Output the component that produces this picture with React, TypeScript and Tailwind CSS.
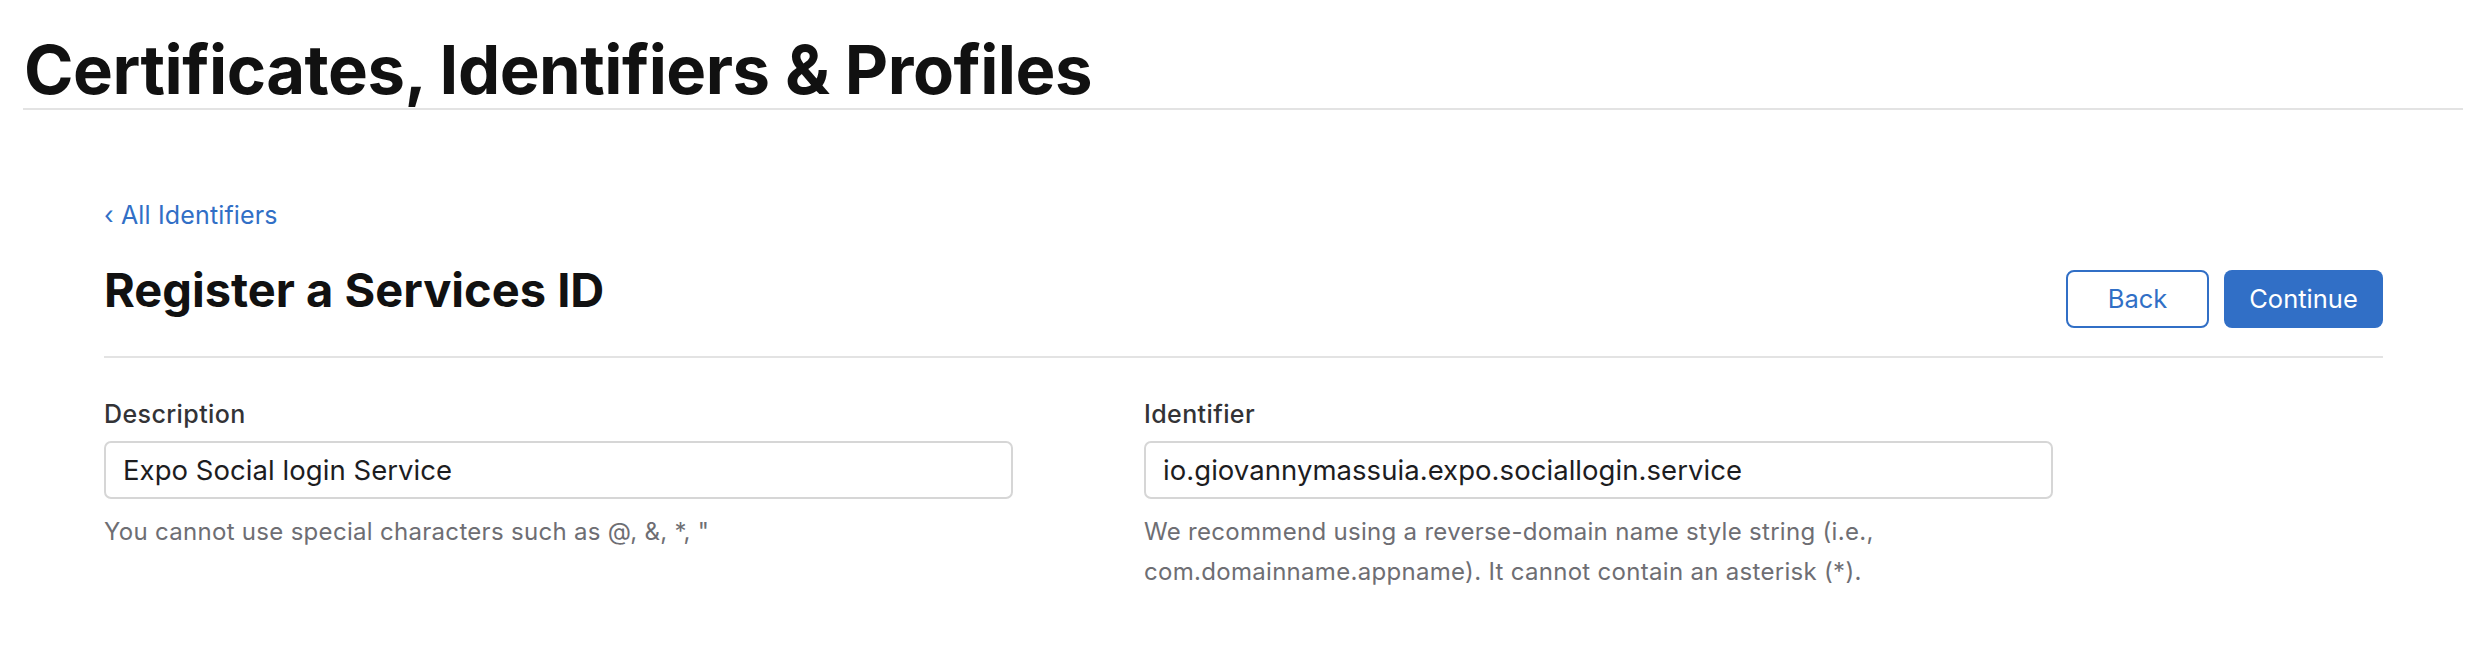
import { useState } from "react";

const font = { fontFamily: "Inter, 'Noto Sans', sans-serif" };

function Field({
  label,
  value,
  help,
}: {
  label: string;
  value: string;
  help: string;
}) {
  const [text, setText] = useState(value);
  return (
    <div className="flex w-[909px] flex-col">
      <label className="text-[25px] font-medium leading-[28px] tracking-[0.4px] text-[#333336]">{label}</label>
      <input
        className="mt-[13px] h-[58px] w-full rounded-[7px] border-2 border-[#d6d6d6] bg-white pl-[17px] text-[27.5px] tracking-[0.05px] text-[#1d1d1f] outline-none"
        value={text}
        onChange={(e) => setText(e.target.value)}
      />
      <p className="mt-[13px] text-[24px] leading-[40px] tracking-[0.3px] text-[#6e6e73]">{help}</p>
    </div>
  );
}

export default function App() {
  return (
    <div className="h-[650px] w-full bg-white" style={font}>
      {/* page header */}
      <div className="ml-[23px] mr-[5px] border-b-2 border-[#e3e3e3] pb-[5px] pt-[36px]">
        <h1 className="pl-[1px] text-[67px] font-bold leading-[67px] tracking-[-0.5px] text-[#111111]">
          Certificates, Identifiers &amp; Profiles
        </h1>
      </div>

      <div className="ml-[104px] w-[2279px]">
        <a href="#" className="mt-[91px] block text-[25px] leading-[28px] tracking-[0.15px] text-[#316fc6]">
          ‹ All Identifiers
        </a>

        <div className="flex items-start justify-between border-b-2 border-[#e3e3e3] pb-[28px]">
          <h2 className="mt-[33px] text-[47px] font-bold leading-[56px] text-[#111111]">
            Register a Services ID
          </h2>
          <div className="mt-[41px] flex gap-[15px]">
            <button
              type="button"
              className="h-[58px] w-[143px] rounded-[8px] border-2 border-[#316fc6] bg-white text-[25.5px] text-[#316fc6]"
            >
              Back
            </button>
            <button
              type="button"
              className="h-[58px] w-[159px] rounded-[8px] bg-[#316fc6] text-[25.5px] text-white"
            >
              Continue
            </button>
          </div>
        </div>

        <div className="mt-[42px] flex gap-[131px]">
          <Field
            label="Description"
            value="Expo Social login Service"
            help={'You cannot use special characters such as @, &, *, "'}
          />
          <Field
            label="Identifier"
            value="io.giovannymassuia.expo.sociallogin.service"
            help="We recommend using a reverse-domain name style string (i.e., com.domainname.appname). It cannot contain an asterisk (*)."
          />
        </div>
      </div>
    </div>
  );
}
